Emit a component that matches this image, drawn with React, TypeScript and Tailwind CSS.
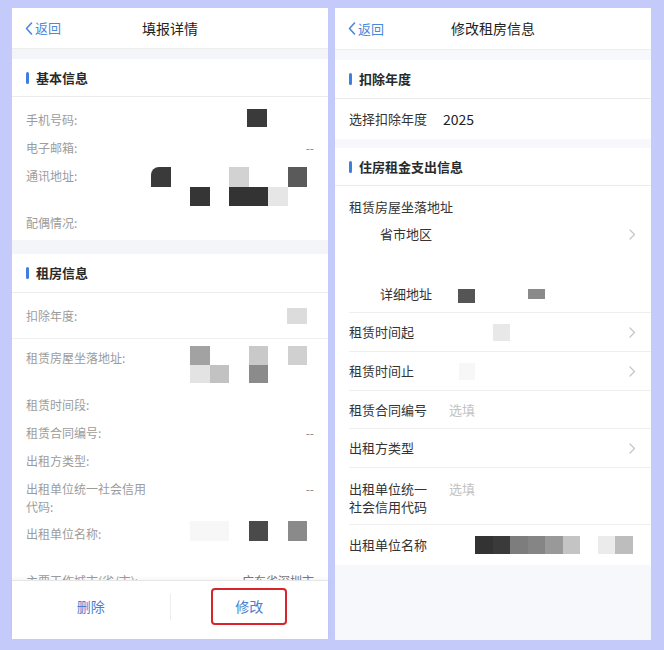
import React from 'react';

type Cells = string[][];

const FONT = { fontFamily: '"Noto Sans CJK SC", "Noto Sans", sans-serif' };

function BackChevron() {
  return (
    <svg width="8" height="13" viewBox="0 0 8 13" fill="none">
      <polyline points="6.5,1 1.5,6.5 6.5,12" stroke="#4a88d9" strokeWidth="1.6" strokeLinecap="round" strokeLinejoin="round" />
    </svg>
  );
}

function RightChevron() {
  return (
    <svg width="7" height="11" viewBox="0 0 7 11" fill="none">
      <polyline points="1,1 5.5,5.5 1,10" stroke="#c4c4c4" strokeWidth="1.2" strokeLinecap="round" strokeLinejoin="round" />
    </svg>
  );
}

function Header({ title, tall }: { title: string; tall?: boolean }) {
  return (
    <div className={`relative flex items-center justify-center border-b border-[#ededed] shrink-0 ${tall ? 'h-[42px]' : 'h-[41px]'}`}>
      <div className="absolute left-[13px] top-0 bottom-0 flex items-center gap-[2px] text-[13px] text-[#4a88d9]">
        <BackChevron />
        <span>返回</span>
      </div>
      <span className="text-[14px] text-[#222]">{title}</span>
    </div>
  );
}

function SectionTitle({ children, pad, h }: { children: React.ReactNode; pad: string; h: string }) {
  return (
    <div className={`flex items-center gap-[7px] border-b border-[#ececec] bg-white ${pad} ${h}`}>
      <div className="w-[3px] h-[12px] rounded-full bg-[#3b7fe0]" />
      <span className="text-[13px] font-bold text-[#2a2a2a]">{children}</span>
    </div>
  );
}

// mosaic blocks used to hide personal data
function Mosaic({ cells, size }: { cells: Cells; size: string }) {
  return (
    <div className="flex flex-col">
      {cells.map((row, i) => (
        <div key={i} className="flex">
          {row.map((c, j) => (
            <div key={j} className={`${size} ${c}`} />
          ))}
        </div>
      ))}
    </div>
  );
}

const C = 'w-[19.5px] h-[19.5px]';

function LRow({ label, children, className = '' }: { label: React.ReactNode; children?: React.ReactNode; className?: string }) {
  return (
    <div className={`flex pl-[14px] pr-[14px] ${className}`}>
      <div className="w-[124px] shrink-0 text-[12px] leading-[28px] text-[#9c9c9c]">{label}</div>
      <div className="flex-1 flex justify-end">{children}</div>
    </div>
  );
}

function Dash() {
  return <span className="text-[12px] leading-[28px] text-[#888]">--</span>;
}

function LeftPanel() {
  return (
    <div className="w-[316px] h-[631px] bg-white flex flex-col" style={FONT}>
      <Header title="填报详情" />
      <div className="flex-1 min-h-0 overflow-hidden">
        <div className="h-[10px] bg-[#f4f5f9]" />
        <SectionTitle pad="pl-[14px]" h="h-[38px]">基本信息</SectionTitle>
        <div className="pt-[9px] pb-[3px]">
          <LRow label="手机号码:">
            <div className="mt-[3px] mr-[47px] w-[20px] h-[18px] bg-[#3a3a3a]" />
          </LRow>
          <LRow label="电子邮箱:">
            <Dash />
          </LRow>
          <LRow label="通讯地址:" className="pb-[3px]">
            <div className="mt-[5px] mr-[7px]">
              <Mosaic
                size={C}
                cells={[
                  ['bg-[#3a3a3a] rounded-tl-[8px]', '', '', '', 'bg-[#d2d2d2]', '', '', 'bg-[#5a5a5a]'],
                  ['', '', 'bg-[#353535]', '', 'bg-[#333]', 'bg-[#333]', 'bg-[#e6e6e6]', ''],
                ]}
              />
            </div>
          </LRow>
          <LRow label="配偶情况:" />
        </div>
        <div className="h-[14px] bg-[#f4f5f9]" />
        <SectionTitle pad="pl-[14px]" h="h-[39px]">租房信息</SectionTitle>
        <div className="flex items-center h-[46px] pl-[14px] pr-[14px] border-b border-[#f0f0f0]">
          <div className="w-[124px] shrink-0 text-[12px] text-[#9c9c9c]">扣除年度:</div>
          <div className="flex-1 flex justify-end">
            <div className="mr-[7px] w-[20px] h-[16px] bg-[#dcdcdc]" />
          </div>
        </div>
        <LRow label="租赁房屋坐落地址:" className="pt-[5px] h-[52px]">
          <div className="mt-[2px] mr-[7px]">
            <Mosaic
              size="w-[19.5px] h-[18.5px]"
              cells={[
                ['', '', 'bg-[#a2a2a2]', '', '', 'bg-[#c9c9c9]', '', 'bg-[#d0d0d0]'],
                ['', '', 'bg-[#e3e3e3]', 'bg-[#c2c2c2]', '', 'bg-[#8b8b8b]', '', ''],
              ]}
            />
          </div>
        </LRow>
        <LRow label="租赁时间段:" />
        <LRow label="租赁合同编号:">
          <Dash />
        </LRow>
        <LRow label="出租方类型:" />
        <div className="flex pl-[14px] pr-[14px] pt-[5px] h-[45px]">
          <div className="w-[124px] shrink-0 text-[12px] leading-[18px] text-[#9c9c9c]">出租单位统一社会信用代码:</div>
          <div className="flex-1 flex justify-end">
            <span className="text-[12px] leading-[18px] text-[#888]">--</span>
          </div>
        </div>
        <LRow label="出租单位名称:">
          <div className="mt-[1px] mr-[7px]">
            <Mosaic
              size="w-[19.5px] h-[20px]"
              cells={[['', '', 'bg-[#f7f7f7]', 'bg-[#f7f7f7]', '', 'bg-[#4a4a4a]', '', 'bg-[#8a8a8a]']]}
            />
          </div>
        </LRow>
        <LRow label="主要工作城市(省/市):" className="mt-[19px]">
          <span className="text-[12px] leading-[28px] text-[#777]">广东省深圳市</span>
        </LRow>
      </div>
      <div className="h-[59px] shrink-0 border-t border-[#e6e6e6] flex items-start pt-[7px] shadow-[0_-2px_4px_rgba(0,0,0,0.04)]">
        <div className="flex-1 h-[37px] flex items-center justify-center text-[14px] text-[#4a7fd0]">删除</div>
        <div className="w-px h-[26px] mt-[6px] bg-[#ededed]" />
        <div className="flex-1 flex justify-center">
          <div className="w-[76px] h-[37px] rounded-[4px] border-[2.5px] border-[#d8252b] flex items-center justify-center text-[14px] text-[#4a7fd0]">
            修改
          </div>
        </div>
      </div>
    </div>
  );
}

function RRow({ label, children, chevron, className = '' }: { label: React.ReactNode; children?: React.ReactNode; chevron?: boolean; className?: string }) {
  return (
    <div className={`flex items-center ml-[14px] pr-[15px] border-b border-[#efefef] ${className}`}>
      <div className="w-[94px] shrink-0 text-[13px] text-[#333]">{label}</div>
      <div className="flex-1 flex items-center">{children}</div>
      {chevron && <RightChevron />}
    </div>
  );
}

function Placeholder() {
  return <span className="pl-[6px] text-[13px] text-[#c2c2c2]">选填</span>;
}

function RightPanel() {
  return (
    <div className="w-[316px] h-[632px] bg-[#f7f8fc] flex flex-col" style={FONT}>
      <div className="bg-white">
        <Header title="修改租房信息" tall />
      </div>
      <div className="h-[10px] shrink-0" />
      <div className="bg-white">
        <SectionTitle pad="pl-[14px]" h="h-[39px]">扣除年度</SectionTitle>
        <div className="flex items-center h-[40px] pl-[14px]">
          <div className="w-[94px] shrink-0 text-[13px] text-[#333]">选择扣除年度</div>
          <span className="text-[14px] text-[#222]">2025</span>
        </div>
      </div>
      <div className="h-[9px] shrink-0" />
      <div className="bg-white">
        <SectionTitle pad="pl-[14px]" h="h-[38px]">住房租金支出信息</SectionTitle>
        <div className="ml-[14px] pr-[15px] pt-[12px] pb-[9px] border-b border-[#efefef] text-[13px] text-[#333] leading-[18px]">
          <div>租赁房屋坐落地址</div>
          <div className="flex items-center mt-[9px] pl-[31px]">
            <span>省市地区</span>
            <div className="flex-1" />
            <RightChevron />
          </div>
          <div className="flex items-center mt-[42px] pl-[31px]">
            <span className="w-[78px] shrink-0">详细地址</span>
            <div className="w-[17px] h-[14px] mt-[4px] bg-[#555]" />
            <div className="w-[17px] h-[10px] ml-[53px] bg-[#8a8a8a]" />
          </div>
        </div>
        <RRow label="租赁时间起" chevron className="h-[39px]">
          <div className="ml-[50px] w-[17px] h-[17px] bg-[#e8e8e8]" />
        </RRow>
        <RRow label="租赁时间止" chevron className="h-[39px]">
          <div className="ml-[16px] w-[16px] h-[17px] bg-[#f7f7f7]" />
        </RRow>
        <RRow label="租赁合同编号" className="h-[38px]">
          <Placeholder />
        </RRow>
        <RRow label="出租方类型" chevron className="h-[39px]" />
        <div className="flex items-start ml-[14px] pr-[15px] pt-[12px] h-[57px] border-b border-[#efefef] leading-[18px]">
          <div className="w-[94px] shrink-0 text-[13px] text-[#333]">
            出租单位统一
            <br />
            社会信用代码
          </div>
          <Placeholder />
        </div>
        <div className="flex items-center ml-[14px] h-[40px]">
          <div className="w-[126px] shrink-0 text-[13px] text-[#333]">出租单位名称</div>
          <Mosaic
            size="w-[17.5px] h-[18px]"
            cells={[
              ['bg-[#333]', 'bg-[#3a3a3a]', 'bg-[#7d7d7d]', 'bg-[#858585]', 'bg-[#999]', 'bg-[#c4c4c4]', '', 'bg-[#ebebeb]', 'bg-[#bdbdbd]'],
            ]}
          />
        </div>
      </div>
    </div>
  );
}

export default function App() {
  return (
    <div className="w-[664px] h-[650px] bg-[#c4cbfb] flex gap-[7px] pl-[12px] pt-[8px]">
      <LeftPanel />
      <RightPanel />
    </div>
  );
}
